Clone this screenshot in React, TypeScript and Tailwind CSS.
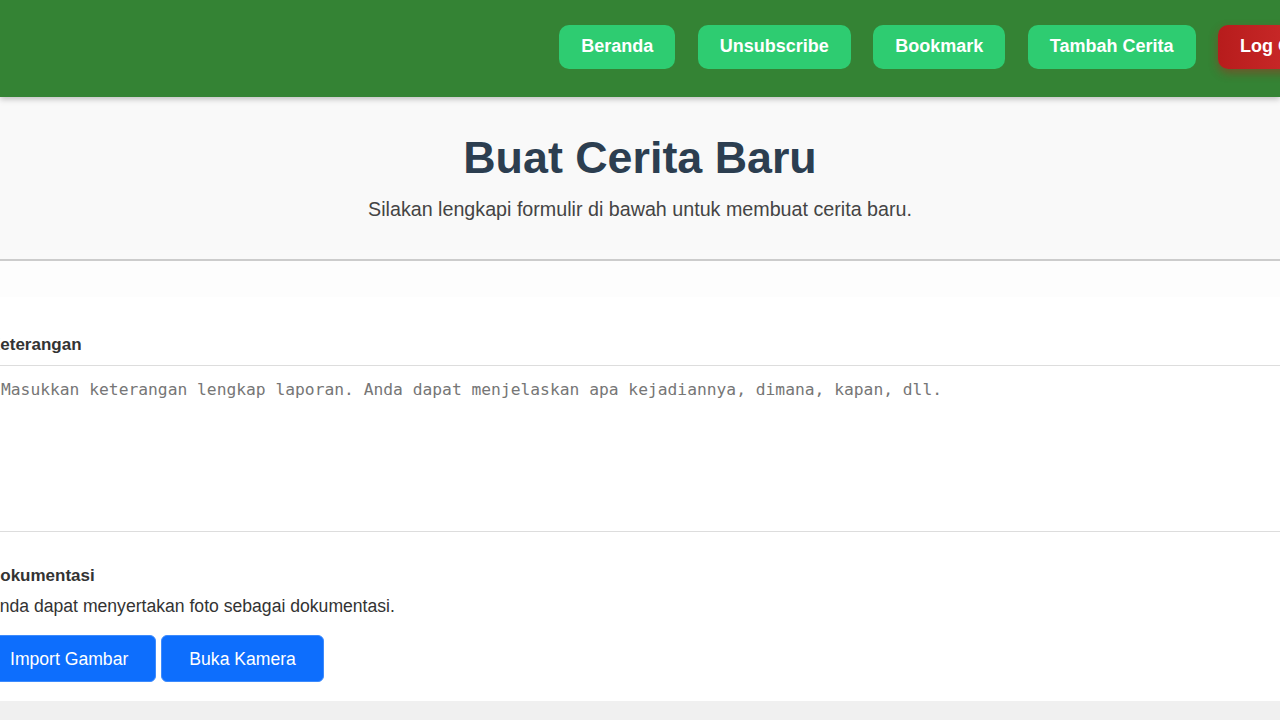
import React from 'react';

const navItems = ['Beranda', 'Unsubscribe', 'Bookmark', 'Tambah Cerita'];

const Header: React.FC = () => (
    <header className="h-[97px] pb-[4px] bg-[#348334] shadow-[0_2px_6px_rgba(0,0,0,0.25)] relative z-10 flex justify-end items-center">
        <nav className="flex items-center gap-[22.5px] -mr-[51px]">
            {navItems.map(item => (
                <a
                    key={item}
                    href="#"
                    className="h-[44px] px-[22px] flex items-center rounded-[10px] bg-[#2ecc71] text-white font-bold text-[18px]"
                >
                    {item}
                </a>
            ))}
            <button className="h-[44px] px-[22px] flex items-center rounded-[10px] bg-gradient-to-r from-[#b71c1c] to-[#d32f2f] text-white font-bold text-[18px] shadow-[0_4px_10px_rgba(183,28,28,0.45)]">
                Log Out
            </button>
        </nav>
    </header>
);

export default function App() {
    return (
        <div className="min-h-screen bg-[#f0f0f0] overflow-hidden font-['Liberation_Sans',Arial,sans-serif]">
            <Header />

            <section className="bg-[#f9f9f9] border-b-2 border-[#cccccc] pt-[35px] pb-[39px] text-center">
                <h1 className="text-[44.8px] leading-[1.15] font-bold text-[#2c3e50] mb-[14px]">Buat Cerita Baru</h1>
                <p className="text-[19.7px] leading-[1.15] text-[#444]">
                    Silakan lengkapi formulir di bawah untuk membuat cerita baru.
                </p>
            </section>

            <div className="bg-white pb-[19px]">
                <div className="h-[36px] bg-[#fdfdfd]" />
                <form className="-mx-[12px] pt-[35px]">
                    <label className="block text-[17px] font-bold text-[#333] mb-[7px]">Keterangan</label>
                    <textarea
                        className="block w-full h-[167px] border border-[#dddddd] rounded-[6px] pt-[12px] pl-[12px] pr-3 text-[16.3px] font-['DejaVu_Sans_Mono',monospace] placeholder:text-[#767676] resize-none outline-none"
                        placeholder="Masukkan keterangan lengkap laporan. Anda dapat menjelaskan apa kejadiannya, dimana, kapan, dll."
                    />

                    <label className="block text-[17px] font-bold text-[#333] mt-[31px]">Dokumentasi</label>
                    <p className="text-[17.6px] leading-[1.15] text-[#333] mt-[8px]">
                        Anda dapat menyertakan foto sebagai dokumentasi.
                    </p>
                    <div className="flex gap-[5px] mt-[19px] -ml-[6px]">
                        <button type="button" className="h-[47px] px-[27px] rounded-[6px] border border-[#3d8bfd] bg-[#0d6efd] text-white text-[17.6px]">
                            Import Gambar
                        </button>
                        <button type="button" className="h-[47px] px-[27px] rounded-[6px] border border-[#3d8bfd] bg-[#0d6efd] text-white text-[17.6px]">
                            Buka Kamera
                        </button>
                    </div>
                </form>
            </div>
        </div>
    );
}
